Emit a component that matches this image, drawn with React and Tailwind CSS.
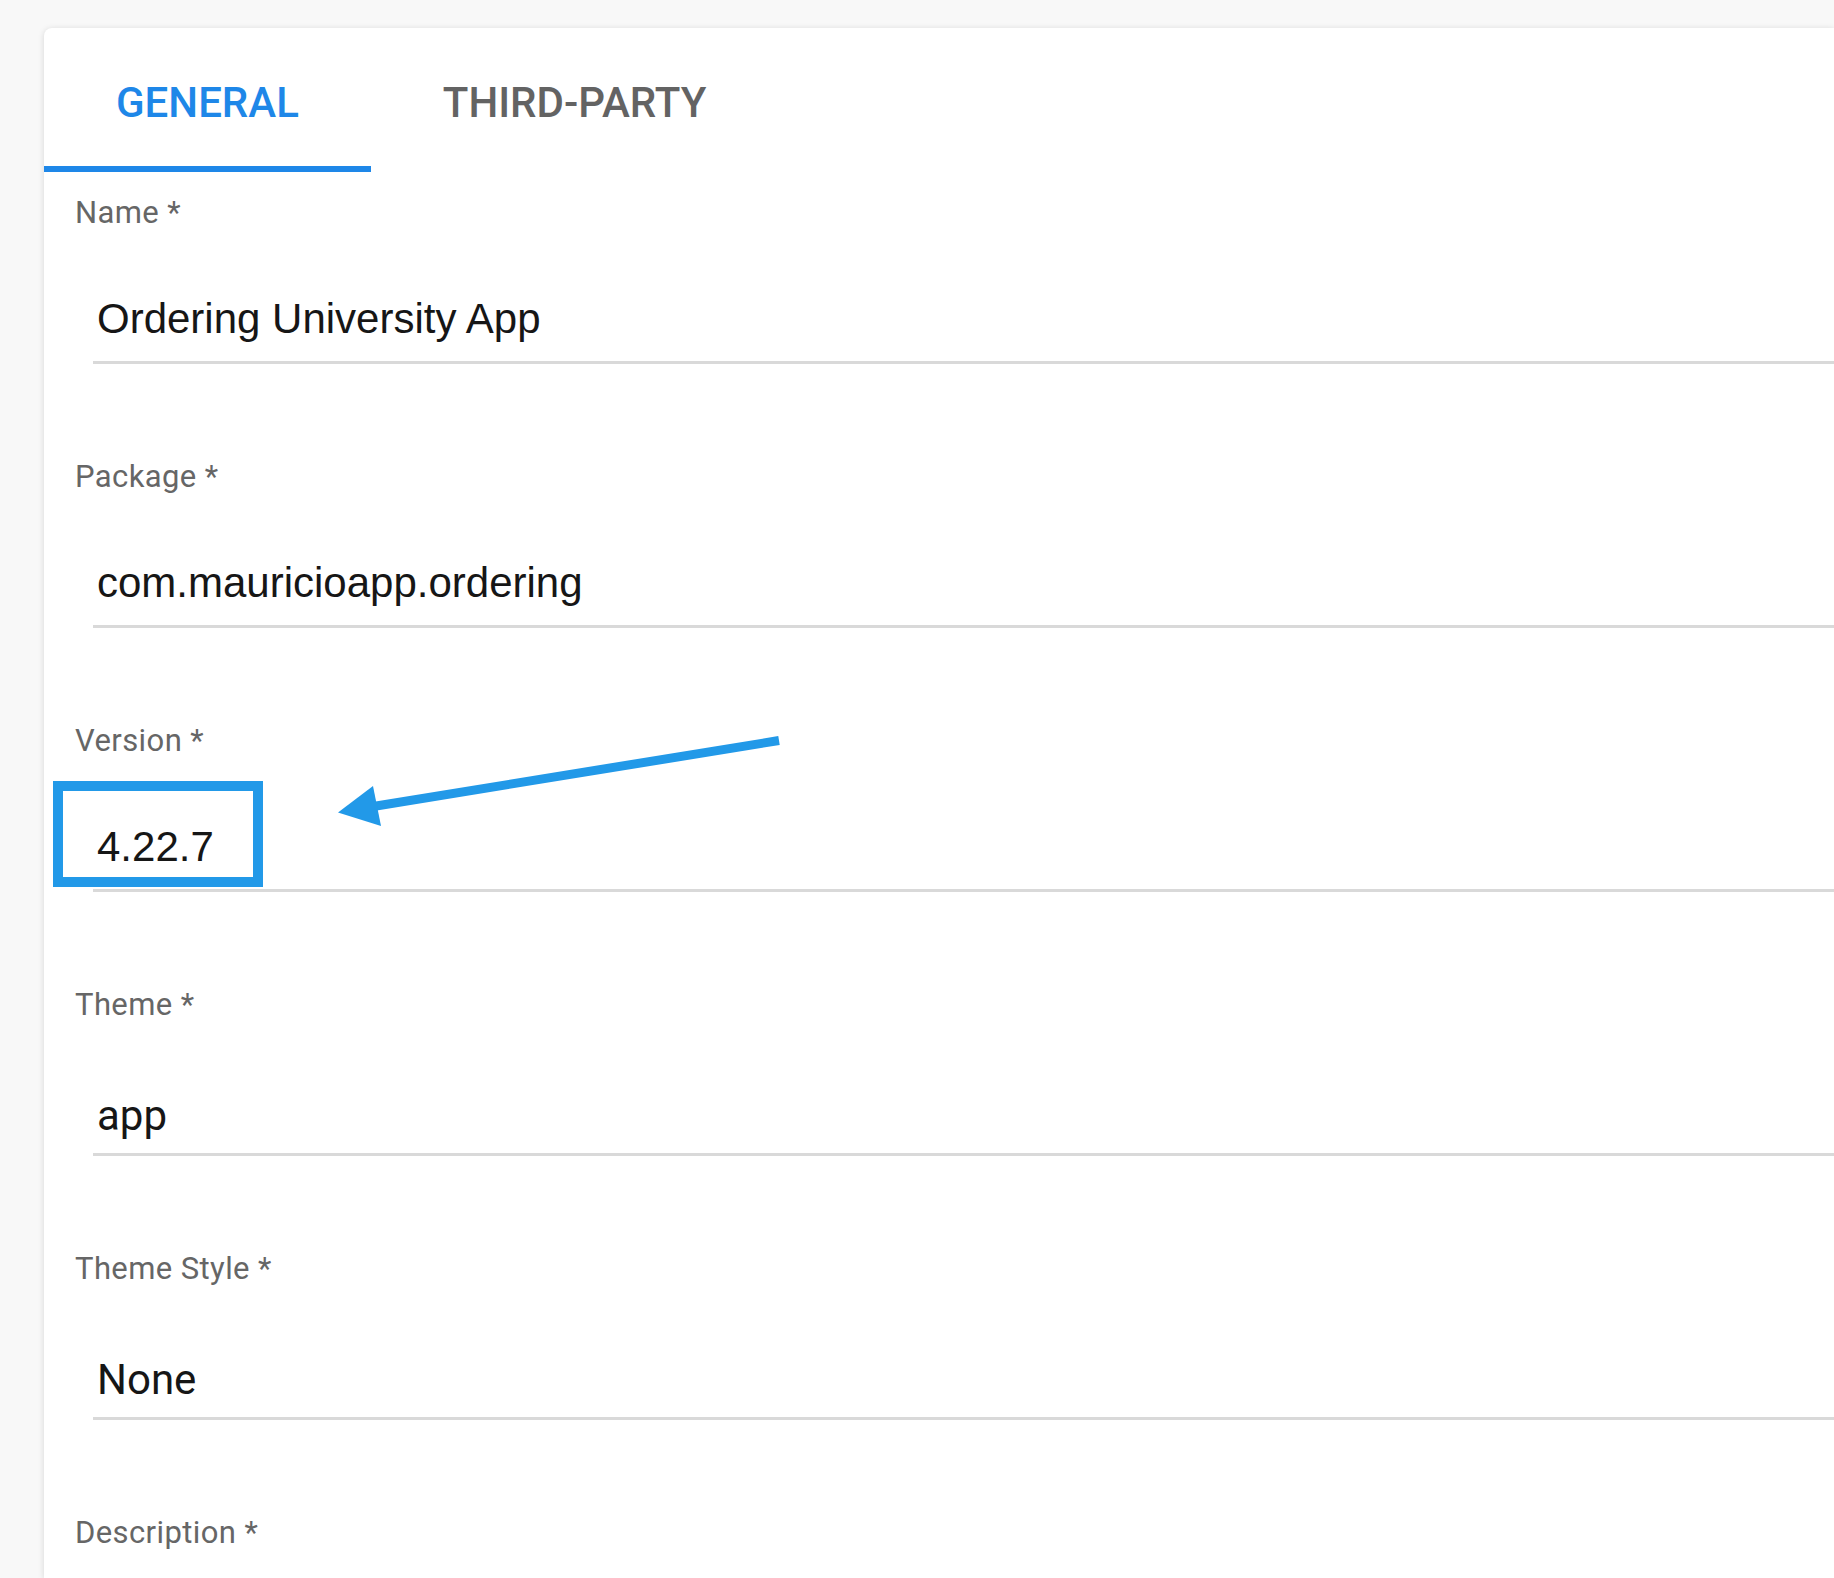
import { useState } from 'react';

const fields = [
  { label: 'Name', value: 'Ordering University App' },
  { label: 'Package', value: 'com.mauricioapp.ordering' },
  { label: 'Version', value: '4.22.7' },
  { label: 'Theme', value: 'app', select: true },
  { label: 'Theme Style', value: 'None', select: true },
  { label: 'Description', value: '' },
];

function Field({ label, value, select }) {
  return (
    <div className="mb-[98px]">
      <div className="font-['Roboto',sans-serif] text-[31px] leading-[30px] tracking-[0.4px] text-[#666666]">
        {label} *
      </div>
      <div
        className={`ml-[18px] border-b-[3px] border-[#d9d9d9] pl-[4px] ${
          select ? 'mt-[75px] pb-[16px]' : 'mt-[70px] pb-[21px]'
        }`}
      >
        <div
          className={`text-[42px] leading-[42px] text-[#161616] h-[42px] ${
            select ? "font-['Roboto',sans-serif]" : "font-['Liberation_Sans',Arial,sans-serif]"
          }`}
        >
          {value}
        </div>
      </div>
    </div>
  );
}

export default function App() {
  const [tab, setTab] = useState('general');

  return (
    <div className="relative w-full h-[1578px] overflow-hidden bg-[#f8f8f8] pt-[28px] pl-[44px]">
      <div className="h-full bg-white rounded-tl-[8px] shadow-[0_1px_6px_rgba(0,0,0,0.14)]">
        {/* Tabs */}
        <div className="flex h-[144px]">
          {[
            { id: 'general', text: 'GENERAL' },
            { id: 'third', text: 'THIRD-PARTY' },
          ].map((t) => (
            <button
              key={t.id}
              onClick={() => setTab(t.id)}
              className={`relative h-full px-[72px] pt-[4px] font-['Roboto',sans-serif] font-medium text-[42px] ${
                tab === t.id ? 'text-[#1e87e8]' : 'text-[#636363]'
              }`}
            >
              {t.text}
              {tab === t.id && (
                <span className="absolute left-0 right-0 bottom-0 h-[6px] bg-[#1e87e8]" />
              )}
            </button>
          ))}
        </div>

        {/* Form */}
        <div className="pt-[26px] pl-[31px]">
          {fields.map((f) => (
            <Field key={f.label} label={f.label} value={f.value} select={f.select} />
          ))}
        </div>
      </div>

      {/* annotation box + arrow */}
      <div className="absolute left-[53px] top-[781px] w-[210px] h-[106px] border-[10px] border-[#2299e8]" />
      <svg className="absolute left-0 top-0" width="1834" height="1578" viewBox="0 0 1834 1578">
        <line x1="779" y1="740.5" x2="370" y2="807" stroke="#2299e8" strokeWidth="9" />
        <polygon points="338,812.5 373,786 381,826" fill="#2299e8" />
      </svg>
    </div>
  );
}
